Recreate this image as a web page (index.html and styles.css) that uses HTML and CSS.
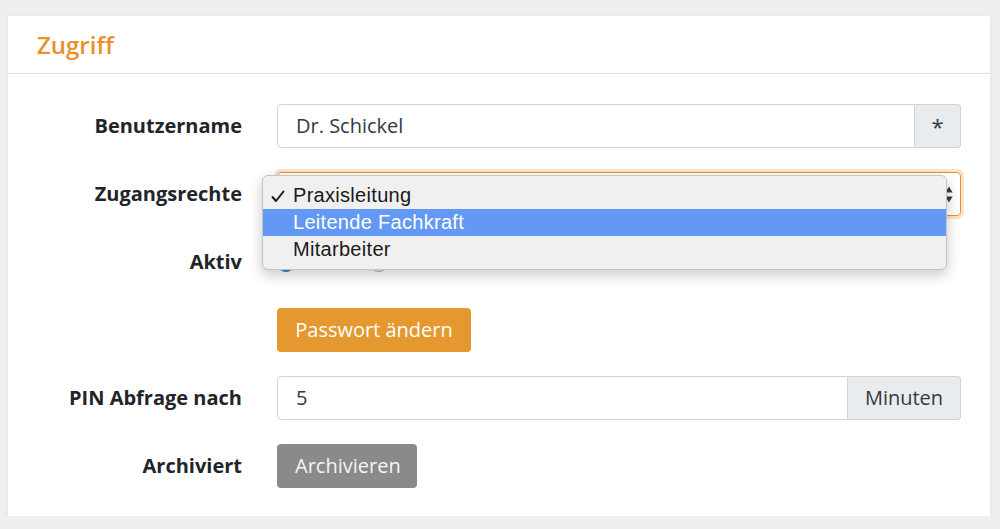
FILE: index.html
```html
<!DOCTYPE html>
<html lang="de">
<head>
<meta charset="utf-8">
<title>Zugriff</title>
<link rel="stylesheet" href="styles.css">
</head>
<body>
<div class="card">
  <div class="card-header">Zugriff</div>
  <div class="card-body">
    <div class="row">
      <label class="label">Benutzername</label>
      <div class="group">
        <div class="input">Dr. Schickel</div>
        <div class="addon addon-star">*</div>
      </div>
    </div>
    <div class="row">
      <label class="label">Zugangsrechte</label>
      <div class="select-wrap">
        <div class="select">
          <span>Praxisleitung</span>
          <svg class="arrows" width="8" height="17" viewBox="0 0 8 17"><path d="M4 0.5 L7.6 6.5 L0.4 6.5 Z M4 16.5 L7.6 10.5 L0.4 10.5 Z" fill="#3a3a3a"/></svg>
        </div>
        <ul class="menu">
          <li class="opt"><svg class="check" width="14" height="13" viewBox="0 0 14 13"><path d="M1.5 7 L5 11 L12.5 1.5" fill="none" stroke="#1a1a1a" stroke-width="2" stroke-linecap="round" stroke-linejoin="round"/></svg>Praxisleitung</li>
          <li class="opt active">Leitende Fachkraft</li>
          <li class="opt">Mitarbeiter</li>
        </ul>
      </div>
    </div>
    <div class="row">
      <label class="label">Aktiv</label>
      <div class="radios">
        <span class="radio checked"></span>
        <span class="radio"></span>
      </div>
    </div>
    <div class="row">
      <span class="label"></span>
      <div><button class="btn btn-orange">Passwort ändern</button></div>
    </div>
    <div class="row">
      <label class="label">PIN Abfrage nach</label>
      <div class="group">
        <div class="input">5</div>
        <div class="addon addon-min">Minuten</div>
      </div>
    </div>
    <div class="row">
      <label class="label">Archiviert</label>
      <div><button class="btn btn-gray">Archivieren</button></div>
    </div>
  </div>
</div>
</body>
</html>
```

FILE: styles.css
```css
* { box-sizing: border-box; }
html, body { margin: 0; padding: 0; }
body {
  background: #efefef;
  font-family: "Open Sans", "Liberation Sans", sans-serif;
  color: #212529;
  padding: 16px 10px 0 8px;
}
.card {
  background: #fff;
  width: 982px;
  box-shadow: 0 1px 4px rgba(0,0,0,0.08);
}
.card-header {
  padding: 12px 29px;
  font-size: 24px;
  line-height: 33px;
  font-weight: 600;
  color: #e8902a;
  border-bottom: 1px solid #dcdfe3;
}
.card-body {
  padding: 30px 29px 28px 30px;
  display: flex;
  flex-direction: column;
  gap: 24px;
}
.row {
  display: grid;
  grid-template-columns: 204px 684px;
  column-gap: 35px;
  align-items: center;
  min-height: 44px;
}
.label {
  text-align: right;
  font-weight: 700;
  font-size: 20px;
  line-height: 30px;
}
.group {
  display: flex;
  height: 44px;
}
.input {
  flex: 1;
  border: 1px solid #ced4da;
  border-radius: 4px 0 0 4px;
  padding: 6px 18px;
  font-size: 20px;
  line-height: 30px;
  color: #343a40;
}
.addon {
  background: #e9ecef;
  border: 1px solid #ced4da;
  border-left: none;
  border-radius: 0 4px 4px 0;
  font-size: 20px;
  line-height: 30px;
  padding: 6px 0;
  text-align: center;
  color: #343a40;
}
.addon-star { width: 46px; font-size: 22px; }
.addon-min { width: 113px; }
.select-wrap { position: relative; height: 44px; }
.select {
  height: 44px;
  border: 1px solid #e8902a;
  border-radius: 4px;
  box-shadow: 0 0 0 3px rgba(232,144,42,0.25);
  padding: 6px 18px;
  font-size: 20px;
  line-height: 30px;
  display: flex;
  justify-content: space-between;
  align-items: center;
}
.arrows { margin-right: -11px; margin-top: 1px; }
.menu {
  position: absolute;
  left: -15px;
  top: 3px;
  width: 685px;
  height: 95px;
  margin: 0;
  padding: 6px 0 0;
  list-style: none;
  background: #f0f0f0;
  border: 1px solid #c4c4c4;
  border-radius: 6px;
  box-shadow: 0 5px 14px rgba(0,0,0,0.22);
  font-family: "Liberation Sans", Arial, sans-serif;
  font-size: 20px;
  letter-spacing: 0.3px;
  color: #1a1a1a;
}
.opt {
  height: 27px;
  line-height: 27px;
  padding-left: 30px;
  position: relative;
}
.opt.active { background: #6399f5; color: #fff; }
.check {
  position: absolute;
  left: 8px;
  top: 8px;
}
.radios {
  display: flex;
  align-items: center;
  gap: 75px;
  height: 44px;
}
.radio {
  width: 18px;
  height: 18px;
  border-radius: 50%;
  border: 1px solid #adb5bd;
  background: #fff;
  margin-top: 1px;
}
.radio.checked { background: #2f7ce6; border-color: #2f7ce6; }
.btn {
  height: 44px;
  border: none;
  border-radius: 4px;
  font-family: "Open Sans", "Liberation Sans", sans-serif;
  font-size: 20px;
  line-height: 30px;
  padding: 7px 18px;
  color: #fff;
}
.btn-orange { background: #e5982f; width: 194px; }
.btn-gray { background: #8a8a8a; color: #f4f4f4; width: 140px; }
```
